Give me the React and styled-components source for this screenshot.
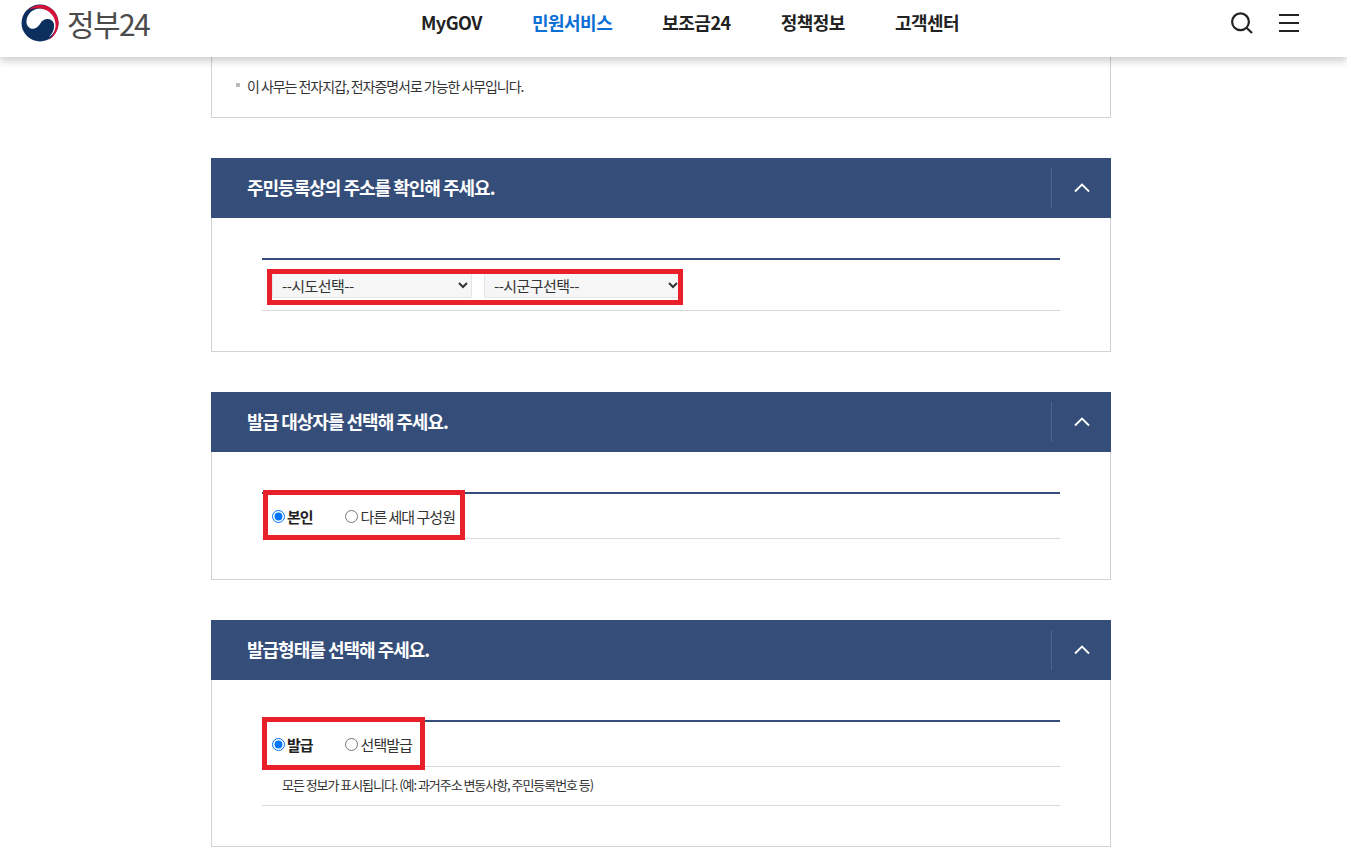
import React from 'react'
import styled, { createGlobalStyle } from 'styled-components'

const GlobalStyle = createGlobalStyle`
  html, body {
    margin: 0;
    padding: 0;
    background: #fff;
    color: #222;
    font-family: "Noto Sans CJK KR", "Noto Sans", sans-serif;
  }
  * { box-sizing: border-box; }
`

function Logo() {
  return (
    <svg width="38" height="38" viewBox="0 0 38 38">
      <circle cx="19" cy="19" r="18.5" fill="#0b2f5f" />
      <path d="M5.5 19C7 26 15 27 19 20C22 14 31 13 33 20C33.5 25 32 29 28 33C33 30 35.5 25 35.5 19C35 11 28 4.5 19 4.5C11 4.5 5 11 5.5 19Z" fill="#fff" />
      <path d="M7 6.5C12 1 20 -0.5 27 2.5C34 6 38 13 37.5 20C37 27 33 33 27.5 36C32 32 35 26 34.5 20C34 12 28 5.5 20 4.5C15 4 10 4.5 7 6.5Z" fill="#d6123a" />
    </svg>
  )
}

function Section({ title, children }) {
  return (
    <Card>
      <CardHead>
        <CardTitle>{title}</CardTitle>
        <Toggle>
          <svg width="16" height="10" viewBox="0 0 16 10">
            <polyline points="1,8.5 8,1.5 15,8.5" fill="none" stroke="#fff" strokeWidth="1.8" />
          </svg>
        </Toggle>
      </CardHead>
      <CardBody>
        <FormTable>{children}</FormTable>
      </CardBody>
    </Card>
  )
}

function Radio({ name, label, checked }) {
  return (
    <RadioLabel $checked={checked}>
      <input type="radio" name={name} defaultChecked={checked} />
      <span>{label}</span>
    </RadioLabel>
  )
}

export default function App() {
  return (
    <>
      <GlobalStyle />
      <Header>
        <Brand>
          <Logo />
          <BrandText>정부24</BrandText>
        </Brand>
        <Nav>
          <NavItem>MyGOV</NavItem>
          <NavItem $active>민원서비스</NavItem>
          <NavItem>보조금24</NavItem>
          <NavItem>정책정보</NavItem>
          <NavItem>고객센터</NavItem>
        </Nav>
        <Tools>
          <svg width="22" height="22" viewBox="0 0 22 22">
            <circle cx="9.5" cy="9.8" r="8.4" fill="none" stroke="#222" strokeWidth="2.2" />
            <line x1="15.5" y1="15.8" x2="21" y2="21" stroke="#222" strokeWidth="2.2" />
          </svg>
          <Burger>
            <i />
            <i />
            <i />
          </Burger>
        </Tools>
      </Header>

      <Main>
        <NoticeCard>
          <NoticeText>이 사무는 전자지갑, 전자증명서로 가능한 사무입니다.</NoticeText>
        </NoticeCard>

        <Section title="주민등록상의 주소를 확인해 주세요.">
          <SelectRow>
            <Highlight $left={5} $top={9} $width={416} $height={36} />
            <AddressSelect $width={200}>
              <option>--시도선택--</option>
            </AddressSelect>
            <AddressSelect $width={198}>
              <option>--시군구선택--</option>
            </AddressSelect>
          </SelectRow>
        </Section>

        <Section title="발급 대상자를 선택해 주세요.">
          <RadioRow>
            <Highlight $left={1} $top={-4} $width={202} $height={50} />
            <Radio name="target" label="본인" checked />
            <Radio name="target" label="다른 세대 구성원" />
          </RadioRow>
        </Section>

        <Section title="발급형태를 선택해 주세요.">
          <RadioRow>
            <Highlight $left={0} $top={-5} $width={163} $height={53} />
            <Radio name="kind" label="발급" checked />
            <Radio name="kind" label="선택발급" />
          </RadioRow>
          <InfoRow>모든 정보가 표시됩니다. (예: 과거주소 변동사항, 주민등록번호 등)</InfoRow>
        </Section>
      </Main>
    </>
  )
}

const Header = styled.header`
  position: relative;
  z-index: 2;
  height: 57px;
  display: flex;
  align-items: flex-start;
  background: #fff;
  box-shadow: 0 4px 8px rgba(0, 0, 0, 0.2);
`

const Brand = styled.div`
  width: 421px;
  padding: 4px 0 0 21px;
  display: flex;
  align-items: flex-start;
  gap: 8px;
`

const BrandText = styled.span`
  font-size: 30px;
  line-height: 38px;
  letter-spacing: -1.6px;
  color: #4b4b4b;
`

const Nav = styled.nav`
  display: flex;
  gap: 50px;
  padding-top: 10px;
`

const NavItem = styled.a`
  font-size: 18px;
  line-height: 25px;
  font-weight: 700;
  letter-spacing: -0.5px;
  color: ${(p) => (p.$active ? '#0b6fd6' : '#222')};
`

const Tools = styled.div`
  margin-left: auto;
  padding: 12px 48px 0 0;
  display: flex;
  align-items: center;
  gap: 26px;
`

const Burger = styled.div`
  width: 20px;
  height: 18px;
  display: flex;
  flex-direction: column;
  justify-content: space-between;

  i {
    display: block;
    height: 2px;
    background: #222;
  }
`

const Main = styled.main`
  width: 900px;
  margin: 0 0 0 211px;
  display: flex;
  flex-direction: column;
  gap: 40px;
`

const NoticeCard = styled.div`
  height: 61px;
  padding: 18px 24px 0;
  border: 1px solid #d2d2d2;
  border-top: 0;
`

const NoticeText = styled.p`
  position: relative;
  margin: 0;
  padding-left: 11px;
  font-size: 14px;
  line-height: 22px;
  letter-spacing: -1.05px;
  color: #333;

  &::before {
    content: '';
    position: absolute;
    left: 0;
    top: 8px;
    width: 4px;
    height: 4px;
    background: #bbb;
  }
`

const Card = styled.section`
  display: flex;
  flex-direction: column;
`

const CardHead = styled.div`
  height: 60px;
  padding-left: 36px;
  display: flex;
  align-items: center;
  justify-content: space-between;
  background: #344e79;
`

const CardTitle = styled.h2`
  margin: 0 0 3px;
  font-size: 18px;
  font-weight: 700;
  letter-spacing: -1px;
  color: #fff;
`

const Toggle = styled.div`
  width: 60px;
  height: 40px;
  display: flex;
  align-items: center;
  justify-content: center;
  border-left: 1px solid rgba(255, 255, 255, 0.13);
`

const CardBody = styled.div`
  padding: 40px 50px;
  border: 1px solid #d2d2d2;
  border-top: 0;
`

const FormTable = styled.div`
  border-top: 2px solid #344e79;
  display: flex;
  flex-direction: column;
`

const Highlight = styled.div`
  position: absolute;
  left: ${(p) => p.$left}px;
  top: ${(p) => p.$top}px;
  width: ${(p) => p.$width}px;
  height: ${(p) => p.$height}px;
  border: 5px solid #e8202a;
  pointer-events: none;
`

const SelectRow = styled.div`
  position: relative;
  height: 51px;
  padding: 12px 0 0 10px;
  display: flex;
  align-items: flex-start;
  gap: 12px;
  border-bottom: 1px solid #d8d8d8;
`

const AddressSelect = styled.select`
  width: ${(p) => p.$width}px;
  height: 26px;
  padding: 0 5px;
  border: 1px solid #e6e6e6;
  background: #f6f6f6;
  font-family: inherit;
  font-size: 15px;
  letter-spacing: -0.55px;
  color: #333;
`

const RadioRow = styled.div`
  position: relative;
  height: 45px;
  padding-left: 10px;
  display: flex;
  align-items: center;
  gap: 32px;
  border-bottom: 1px solid #d8d8d8;
`

const RadioLabel = styled.label`
  display: flex;
  align-items: center;
  gap: ${(p) => (p.$checked ? 2 : 3)}px;
  font-size: 15px;
  letter-spacing: -1px;
  font-weight: ${(p) => (p.$checked ? 700 : 400)};
  color: ${(p) => (p.$checked ? '#222' : '#333')};

  input {
    width: 13px;
    height: 13px;
    margin: 1px 0 0;
  }
`

const InfoRow = styled.div`
  height: 39px;
  padding: 0 0 4px 20px;
  display: flex;
  align-items: center;
  font-size: 13px;
  letter-spacing: -1.05px;
  color: #333;
  border-bottom: 1px solid #d8d8d8;
`
